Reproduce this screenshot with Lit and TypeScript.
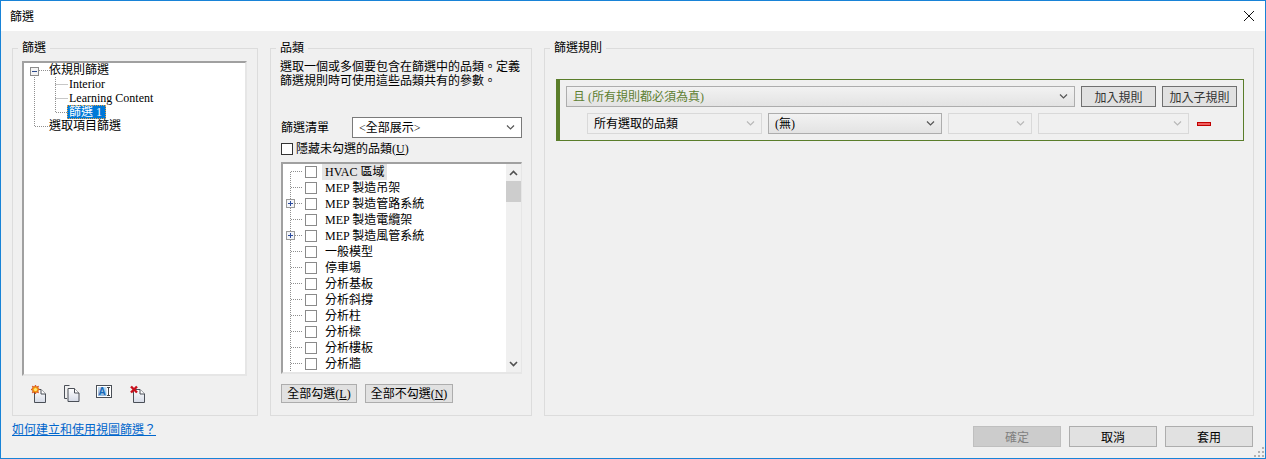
import { LitElement, css, html, svg } from 'lit';
import { customElement } from 'lit/decorators.js';

const TREE = [
  { label: '依規則篩選', level: 0, kind: 'root' },
  { label: 'Interior', level: 1, kind: 'mid' },
  { label: 'Learning Content', level: 1, kind: 'mid' },
  { label: '篩選 1', level: 1, kind: 'last', selected: true },
  { label: '選取項目篩選', level: 0, kind: 'end' },
];

const CATEGORIES = [
  { label: 'HVAC 區域', first: true },
  { label: 'MEP 製造吊架' },
  { label: 'MEP 製造管路系統', expand: true },
  { label: 'MEP 製造電纜架' },
  { label: 'MEP 製造風管系統', expand: true },
  { label: '一般模型' },
  { label: '停車場' },
  { label: '分析基板' },
  { label: '分析斜撐' },
  { label: '分析柱' },
  { label: '分析樑' },
  { label: '分析樓板' },
  { label: '分析牆' },
];

const DOT = '1 1';
const LINE = '#8f8f8f';

function chevron(color = '#555') {
  return html`<svg class="chev" width="9" height="5" viewBox="0 0 9 5">
    <path d="M1 .5 L4.5 4 L8 .5" fill="none" stroke=${color} stroke-width="1.2"></path>
  </svg>`;
}

function treeGuide(kind: string) {
  // 一列 14px，虛線畫在列內
  const parts = {
    root: svg`
      <path d="M11.5 12 V14 M15 7.5 H27" />
      <rect x="6.5" y="4.5" width="8" height="8" fill="#f4f4f4" stroke="#8c8c8c" style="stroke-dasharray:none" />
      <path d="M8 8.5 H13" stroke="#2b4a8c" style="stroke-dasharray:none" />`,
    mid: svg`<path d="M10.5 0 V14 M31.5 0 V14 M31.5 7.5 H44" />`,
    last: svg`<path d="M10.5 0 V14 M31.5 0 V7.5 H44" />`,
    end: svg`<path d="M10.5 0 V7.5 H27" />`,
  } as Record<string, unknown>;
  return html`<svg class="guide" width="45" height="14" fill="none" stroke=${LINE} stroke-dasharray=${DOT}>
    ${parts[kind]}
  </svg>`;
}

function listGuide(first: boolean, expand: boolean) {
  return html`<svg class="guide" width="22" height="16" fill="none" stroke=${LINE} stroke-dasharray=${DOT}>
    <path d=${first ? 'M7.5 8 V16 M8 7.5 H20' : 'M7.5 0 V16 M8 7.5 H20'} />
    ${expand
      ? svg`<rect x="3.5" y="3.5" width="8" height="8" fill="#f2f4f8" stroke="#9a9a9a" style="stroke-dasharray:none" />
          <path d="M5 7.5 H10 M7.5 5 V10" stroke="#2b4a9c" style="stroke-dasharray:none" />`
      : ''}
  </svg>`;
}

const pageShape = svg`<path d="M1.5 4.5 H8 L12.5 9 V17.5 H1.5 Z" fill="url(#pg)" stroke="#4a4f57" />
  <path d="M8 4.5 V9 H12.5" fill="#fff" stroke="#4a4f57" />`;

const pageGrad = svg`<defs><linearGradient id="pg" x1="0" y1="0" x2="0" y2="1">
  <stop offset="0" stop-color="#ffffff" /><stop offset="1" stop-color="#d5dae6" /></linearGradient></defs>`;

const iconNew = html`<svg width="16" height="18" viewBox="0 0 16 18" style="margin-left:2px">
  ${pageGrad}<g transform="translate(2 0)">${pageShape}</g>
  <path d="M4.5 0 L5.3 2 L7.5 1.2 L6.8 3.3 L8.8 4.5 L6.8 5.5 L7.5 7.8 L5.3 7 L4.5 9 L3.5 7 L1.3 7.8 L2 5.5 L0 4.5 L2 3.3 L1.3 1.2 L3.5 2 Z" fill="#f5a30f" stroke="#d23c10" stroke-width=".7" />
  <circle cx="4.5" cy="4.5" r="1.6" fill="#ffe97a" />
</svg>`;

const iconCopy = html`<svg width="17" height="17" viewBox="0 0 17 17" fill="none">
  ${pageGrad}
  <path d="M6.5 .5 H1.5 V13.5 H4" stroke="#4a4f57" />
  <g transform="translate(3.5 -1)">${pageShape}</g>
</svg>`;

const iconRename = html`<svg width="16" height="14" viewBox="0 0 16 14">
  <defs><linearGradient id="rn" x1="0" y1="0" x2="0" y2="1">
    <stop offset="0" stop-color="#c6dcf0" /><stop offset="1" stop-color="#8fb8de" /></linearGradient></defs>
  <rect x=".5" y=".5" width="15" height="12" fill="#fff" stroke="#4a4f57" />
  <rect x="2" y="2" width="8.5" height="9" fill="url(#rn)" />
  <text x="6.2" y="10" text-anchor="middle" class="icon-a">A</text>
  <path d="M11 2.5 H14 M12.5 2.5 V10.5 M11 10.5 H14" stroke="#444" fill="none" />
</svg>`;

const iconDelete = html`<svg width="16" height="18" viewBox="0 0 16 18" style="margin-left:2px">
  ${pageGrad}<g transform="translate(2 0)">${pageShape}</g>
  <path d="M1 1.5 L7 7.5 M7 1.5 L1 7.5" stroke="#c8101c" stroke-width="2.4" />
</svg>`;

@customElement('app-root')
export class AppRoot extends LitElement {
  static styles = css`
    :host {
      display: block;
      height: 459px;
      font: 12px/14px 'Liberation Serif', 'Noto Sans CJK TC', serif;
      color: #000;
    }

    * { box-sizing: border-box; }

    .window {
      height: 459px;
      border: 1px solid #1883d7;
      background: #f0f0f0;
      display: flex;
      flex-direction: column;
    }

    .titlebar {
      height: 30px;
      background: #fff;
      display: flex;
      align-items: center;
      justify-content: space-between;
      padding: 0 10px 0 9px;
      font-family: 'Noto Sans CJK TC', sans-serif;
    }

    .panels {
      margin-top: 17px;
      padding: 0 11px;
      display: grid;
      grid-template-columns: 246px 262px 710px;
      gap: 12px;
      height: 368px;
    }

    .panel {
      position: relative;
      border: 1px solid #dcdcdc;
      display: flex;
      flex-direction: column;
    }

    .legend {
      position: absolute;
      top: -8px;
      left: 5px;
      padding: 0 4px;
      background: #f0f0f0;
    }

    .filters { padding: 12px 9px 0; }

    .tree {
      width: 225px;
      height: 315px;
      background: #fff;
      border: 2px solid #e6e6e6;
      border-top-color: #a0a0a0;
      border-left-color: #a0a0a0;
    }

    .tree-row {
      display: flex;
      height: 14px;
      align-items: center;
      white-space: nowrap;
    }

    .guide { flex: none; display: block; }
    .tree-row.top .guide { margin-right: -21px; }
    .tree-row.top span { margin-left: 1px; }

    .selected {
      background: #0078d7;
      color: #fff;
      outline: 1px dotted #e8a040;
      outline-offset: -1px;
      height: 14px;
      padding: 0 2px;
      margin-left: -2px;
      min-width: 39px;
    }

    .toolbar {
      display: flex;
      align-items: flex-start;
      margin-top: 9px;
      padding-left: 7px;
      gap: 16px;
    }

    .toolbar svg { display: block; }
    .icon-a { font: bold 10px 'Liberation Sans', sans-serif; fill: #1668b8; }

    .categories { padding: 11px 10px 0; }

    .intro { margin: 0 0 0 -1px; height: 42px; line-height: 14px; font-size: 12px; white-space: pre-line; }

    .list-filter {
      display: flex;
      align-items: center;
      justify-content: space-between;
      margin-top: 15px;
      margin-right: -1px;
    }

    .select {
      display: flex;
      align-items: center;
      justify-content: space-between;
      height: 21px;
      padding: 0 6px;
      border: 1px solid #adadad;
      background: linear-gradient(#f2f2f2, #e3e3e3);
      white-space: nowrap;
    }

    .select.white { width: 170px; background: #fff; border-color: #7a7a7a; }
    .select.off { background: #f0f0f0; border-color: #d9d9d9; }

    .hide-row {
      display: flex;
      align-items: center;
      gap: 3px;
      margin-top: 5px;
      height: 12px;
    }

    .box {
      flex: none;
      display: block;
      width: 12px;
      height: 12px;
      background: #fff;
      border: 1px solid #333;
    }

    .list {
      display: flex;
      width: 241px;
      height: 212px;
      margin-top: 7px;
      background: #fff;
      border: 2px solid #e6e6e6;
      border-top-color: #a0a0a0;
      border-left-color: #a0a0a0;
      border-right-width: 1px;
      overflow: hidden;
    }

    .rows { flex: 1; }

    .list-row {
      display: flex;
      align-items: center;
      height: 16px;
      white-space: nowrap;
    }

    .list-row .box { border-color: #8a8a8a; width: 12px; height: 12px; margin-right: 5px; }
    .list-row span { padding: 0 3px; height: 16px; line-height: 16px; }
    .list-row span.hot { background: #e4e4e4; }

    .scrollbar {
      flex: none;
      width: 15px;
      background: #f0f0f0;
      display: flex;
      flex-direction: column;
      align-items: center;
    }

    .arrow { height: 17px; display: flex; align-items: center; justify-content: center; }
    .thumb { width: 15px; height: 21px; background: #cdcdcd; }
    .fill { flex: 1; }

    .list-buttons { display: flex; gap: 8px; margin-top: 10px; }

    .btn {
      display: flex;
      align-items: center;
      justify-content: center;
      height: 19px;
      padding: 0;
      background: #e1e1e1;
      border: 1px solid #adadad;
      font: inherit;
      color: inherit;
      white-space: nowrap;
    }

    .rules { padding: 30px 11px 0; }

    .group {
      width: 688px;
      height: 62px;
      border: 1px solid #5a7d2a;
      border-left-width: 4px;
      padding: 6px 6px 0 6px;
    }

    .group-row { display: flex; align-items: center; }
    .group-row + .group-row { margin-top: 6px; padding-left: 21px; gap: 6px; }

    .and { width: 509px; color: #5e7f32; }
    .btn.rule { width: 75px; height: 21px; border-color: #707070; margin-left: 6px; font-family: 'Noto Sans CJK TC', sans-serif; color: #333; }

    .minus {
      flex: none;
      width: 14px;
      height: 4px;
      margin-left: 2px;
      background: #f06060;
      border: 1px solid #c00000;
    }

    .footer {
      flex: 1;
      display: flex;
      justify-content: space-between;
      padding: 7px 12px 0 11px;
    }

    a { color: #0066cc; height: 14px; }

    .actions { display: flex; gap: 8px; padding-top: 3px; }
    .btn.act { width: 88px; height: 21px; font-family: 'Noto Sans CJK TC', sans-serif; }
    .btn.act[disabled] { background: #cccccc; border-color: #bfbfbf; color: #808080; }

    .grip {
      position: absolute;
      right: 1px;
      bottom: 1px;
      display: block;
    }
  `;

  render() {
    return html`
      <div class="window">
        <div class="titlebar">
          <span>篩選</span>
          <svg width="12" height="12" viewBox="0 0 12 12"><path d="M1 1 L11 11 M11 1 L1 11" stroke="#111" fill="none"></path></svg>
        </div>

        <div class="panels">
          <section class="panel filters">
            <div class="legend">篩選</div>
            <div class="tree">
              ${TREE.map(
                (row) => html`<div class="tree-row ${row.level === 0 ? 'top' : ''}">
                  ${treeGuide(row.kind)}
                  <span class=${row.selected ? 'selected' : ''}>${row.label}</span>
                </div>`,
              )}
            </div>
            <div class="toolbar">${iconNew}${iconCopy}${iconRename}${iconDelete}</div>
          </section>

          <section class="panel categories">
            <div class="legend">品類</div>
            <p class="intro">選取一個或多個要包含在篩選中的品類。定義
篩選規則時可使用這些品類共有的參數。</p>
            <div class="list-filter">
              <span>篩選清單</span>
              <div class="select white"><span>&lt;全部展示&gt;</span>${chevron()}</div>
            </div>
            <div class="hide-row"><i class="box"></i><span>隱藏未勾選的品類(<u>U</u>)</span></div>
            <div class="list">
              <div class="rows">
                ${CATEGORIES.map(
                  (row) => html`<div class="list-row">
                    ${listGuide(!!row.first, !!row.expand)}
                    <i class="box"></i>
                    <span class=${row.first ? 'hot' : ''}>${row.label}</span>
                  </div>`,
                )}
              </div>
              <div class="scrollbar">
                <div class="arrow">
                  <svg width="9" height="6" viewBox="0 0 9 6"><path d="M1 5 L4.5 1.5 L8 5" fill="none" stroke="#505050" stroke-width="1.6"></path></svg>
                </div>
                <div class="thumb"></div>
                <div class="fill"></div>
                <div class="arrow">
                  <svg width="9" height="6" viewBox="0 0 9 6"><path d="M1 1 L4.5 4.5 L8 1" fill="none" stroke="#505050" stroke-width="1.6"></path></svg>
                </div>
              </div>
            </div>
            <div class="list-buttons">
              <button class="btn" style="width:76px">全部勾選(<u>L</u>)</button>
              <button class="btn" style="width:88px">全部不勾選(<u>N</u>)</button>
            </div>
          </section>

          <section class="panel rules">
            <div class="legend">篩選規則</div>
            <div class="group">
              <div class="group-row">
                <div class="select and"><span>且 (所有規則都必須為真)</span>${chevron()}</div>
                <button class="btn rule">加入規則</button>
                <button class="btn rule">加入子規則</button>
              </div>
              <div class="group-row">
                <div class="select off" style="width:175px"><span>所有選取的品類</span>${chevron('#b8b8b8')}</div>
                <div class="select" style="width:174px"><span>(無)</span>${chevron()}</div>
                <div class="select off" style="width:84px"><span></span>${chevron('#b8b8b8')}</div>
                <div class="select off" style="width:151px"><span></span>${chevron('#b8b8b8')}</div>
                <i class="minus"></i>
              </div>
            </div>
          </section>
        </div>

        <div class="footer">
          <a href="#">如何建立和使用視圖篩選？</a>
          <div class="actions">
            <button class="btn act" disabled>確定</button>
            <button class="btn act">取消</button>
            <button class="btn act">套用</button>
          </div>
        </div>
      </div>
      <svg class="grip" width="11" height="11" viewBox="0 0 11 11" fill="#b0b0b0">
        <rect x="8" y="0" width="2" height="2"></rect>
        <rect x="4" y="4" width="2" height="2"></rect><rect x="8" y="4" width="2" height="2"></rect>
        <rect x="0" y="8" width="2" height="2"></rect><rect x="4" y="8" width="2" height="2"></rect><rect x="8" y="8" width="2" height="2"></rect>
      </svg>
    `;
  }
}
